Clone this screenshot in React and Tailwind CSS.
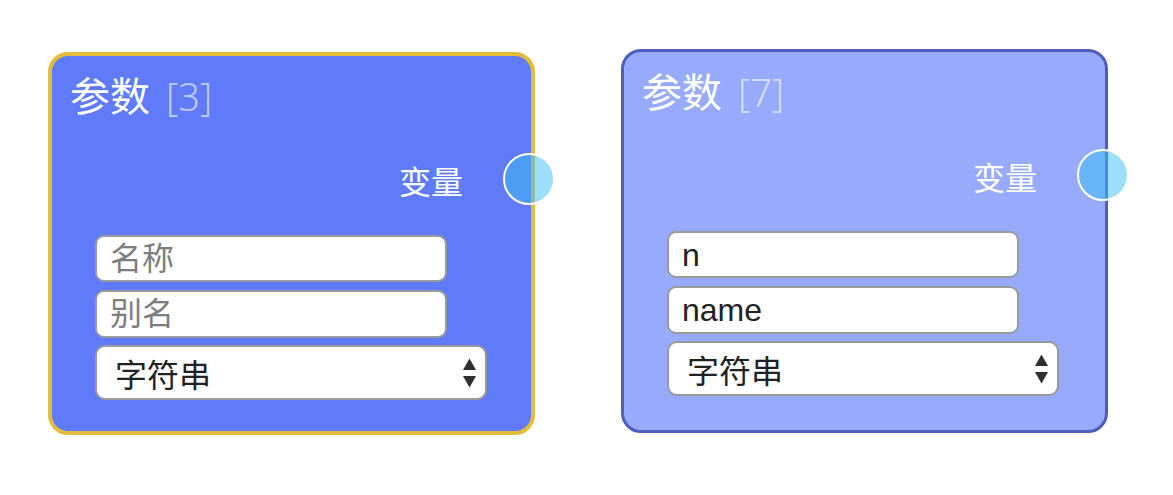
import React from 'react';

const font = { fontFamily: '"Noto Sans CJK SC", "Liberation Sans", sans-serif' };

const Arrows = () => (
  <svg width="13" height="29" viewBox="0 0 13 29" className="pointer-events-none absolute right-[11px] top-1/2 -translate-y-1/2">
    <path d="M6.5 0 L13 11.5 L0 11.5 Z" fill="#2f2f2f" />
    <path d="M0 17.5 L13 17.5 L6.5 29 Z" fill="#2f2f2f" />
  </svg>
);

const ParamNode = ({ count, name, alias, className, portClassName }) => (
  <div className={`relative w-[487px] rounded-[20px] pl-[18px] pt-[18px] ${className}`} style={font}>
    <div className="flex items-baseline text-[40px] leading-none text-white">
      <span>参数</span>
      <span
        className="ml-[16px] font-light text-white/60"
        style={{ fontSize: 38, fontFamily: '"Noto Sans", "Liberation Sans", sans-serif', fontWeight: 300 }}
      >
        [{count}]
      </span>
    </div>

    <div className="mt-[49px] flex justify-end pr-[68px] text-[32px] leading-none text-white">变量</div>

    {/* output port */}
    <div className={`absolute right-[-24px] top-[97px] h-[52px] w-[52px] rounded-full border-2 border-white ${portClassName}`} />

    <div className="mt-[39px] flex flex-col pl-[25px]">
      <input
        readOnly
        value={name}
        placeholder="名称"
        className="h-[47px] w-[352px] rounded-[9px] border-2 border-[#9a9a9a] bg-white px-[13px] text-[32px] text-[#222] outline-none placeholder:text-[#7d7d7d]"
        style={{ fontFamily: '"Liberation Sans", "Noto Sans CJK SC", sans-serif' }}
      />
      <input
        readOnly
        value={alias}
        placeholder="别名"
        className="mt-[8px] h-[48px] w-[352px] rounded-[9px] border-2 border-[#9a9a9a] bg-white px-[13px] text-[32px] text-[#222] outline-none placeholder:text-[#7d7d7d]"
        style={{ fontFamily: '"Liberation Sans", "Noto Sans CJK SC", sans-serif' }}
      />
      <div className="relative mt-[7px] w-[392px]">
        <select
          defaultValue="string"
          className="h-[55px] w-full appearance-none rounded-[10px] border-2 border-[#9a9a9a] bg-white pl-[18px] pr-[40px] text-[32px] text-[#222] outline-none"
          style={font}
        >
          <option value="string">字符串</option>
          <option value="number">数字</option>
          <option value="bool">布尔值</option>
        </select>
        <Arrows />
      </div>
    </div>
  </div>
);

export default function App() {
  return (
    <div className="flex h-[495px] w-[1173px] items-start bg-white pl-[48px] pt-[49px]">
      <ParamNode
        count={3}
        name=""
        alias=""
        className="mt-[3px] border-4 border-[#e1bd3b] bg-[#5f7bf9] pb-[31px]"
        portClassName="bg-[rgba(59,191,245,0.5)]"
      />
      <ParamNode
        count={7}
        name="n"
        alias="name"
        className="ml-[86px] w-[486px] border-[3px] border-[#4f5dbf] bg-[#97aafc] pb-[34px]"
        portClassName="bg-[rgba(59,191,245,0.5)]"
      />
    </div>
  );
}
